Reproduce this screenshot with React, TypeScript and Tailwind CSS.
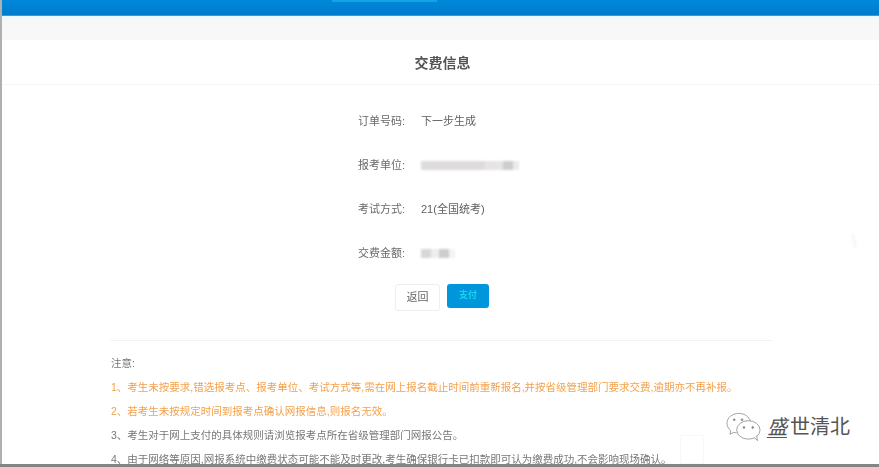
import React from "react";

const cjk = "font-['Liberation_Sans','Noto_Sans_CJK_SC',sans-serif]";

function Row({ label, children }: { label: string; children: React.ReactNode }) {
  return (
    <div className="flex h-[44px] items-center blur-[0.4px]">
      <div className="w-[63px] text-[11px] text-[#6a6a6a]">{label}</div>
      <div className="text-[11px] text-[#5f5f5f]">{children}</div>
    </div>
  );
}

function Blur({ parts }: { parts: [number, string][] }) {
  return (
    <div className="flex h-[9px] blur-[1.2px]">
      {parts.map(([w, c], i) => (
        <div key={i} className="h-full" style={{ width: w, background: c }} />
      ))}
    </div>
  );
}

export default function App() {
  return (
    <div className={`relative h-[467px] w-[879px] overflow-hidden bg-white ${cjk}`}>
      <div className="flex h-full flex-col border-l-2 border-[#b0b0b0]">
        <div className="h-[16px] shrink-0 border-b border-[#00b4dc] bg-gradient-to-b from-[#0088da] to-[#007ccd] pl-[330px]">
          <div className="h-[2px] w-[105px] bg-[#12a5e4]" />
        </div>
        <div className="h-[4px] shrink-0 bg-gradient-to-b from-[#e4fbff] to-[#f8f8f8]" />
        <div className="h-[20px] shrink-0 bg-[#f8f8f8]" />
        <div className="flex h-[45px] shrink-0 items-center justify-center border-b border-[#f6f6f6] pl-[4px] pt-[2px] text-[14px] font-bold text-[#555] blur-[0.4px]">
          交费信息
        </div>
        <div className="flex flex-col pl-[356px] pt-[14px]">
          <Row label="订单号码:">下一步生成</Row>
          <Row label="报考单位:">
            <Blur parts={[[64, "#dedbdb"], [18, "#e6e4e4"], [10, "#cfcccc"], [6, "#ecebeb"]]} />
          </Row>
          <Row label="考试方式:">21(全国统考)</Row>
          <Row label="交费金额:">
            <Blur parts={[[10, "#d9d6d6"], [8, "#eeeeee"], [10, "#cfcccc"], [6, "#f3f3f3"]]} />
          </Row>
        </div>
        <div className="ml-[393px] mt-[9px] flex gap-[7px] blur-[0.3px]">
          <div className="flex h-[27px] w-[45px] items-center justify-center rounded-[3px] border border-[#eeeeee] text-[11px] text-[#666]">返回</div>
          <div className="flex h-[24px] w-[42px] items-center justify-center rounded-[3px] bg-[#0096dc] text-[9px] font-bold text-[#19d3ef]">支付</div>
        </div>
        <div className="ml-[108px] mt-[29px] h-px w-[662px] shrink-0 bg-[#f2f2f2]" />
        <div className="ml-[109px] flex flex-col gap-[10px] pt-[15px] text-[10.5px] leading-[14px] text-[#777] blur-[0.5px]">
          <div>注意:</div>
          <div className="whitespace-nowrap text-[#f5a04a]">1、考生未按要求,错选报考点、报考单位、考试方式等,需在网上报名截止时间前重新报名,并按省级管理部门要求交费,逾期亦不再补报。</div>
          <div className="text-[#f5a04a]">2、若考生未按规定时间到报考点确认网报信息,则报名无效。</div>
          <div>3、考生对于网上支付的具体规则请浏览报考点所在省级管理部门网报公告。</div>
          <div className="whitespace-nowrap">4、由于网络等原因,网报系统中缴费状态可能不能及时更改,考生确保银行卡已扣款即可认为缴费成功,不会影响现场确认。</div>
        </div>
      </div>
      <div className="absolute bottom-0 left-0 h-[3px] w-full bg-[#858585]" />
      <div className="absolute left-[680px] top-[435px] h-[29px] w-[24px] rounded-[2px] border border-[#f8f8f8]" />
      <div className="absolute left-[852px] top-[234px] h-[14px] w-[4px] rotate-[-15deg] bg-[#f8f8f8] blur-[1px]" />
      <div className="absolute left-[726px] top-[412px] flex items-center gap-[8px]">
        <svg width="35" height="30" viewBox="0 0 36 30" fill="none" stroke="#8a8a8a" strokeWidth="0.8">
          <path d="M11 21c-1 0-2-.2-3-.5l-4 2 1-3.500C2.500 17 1 14 1 11 1 5.500 6.500 1 13 1c6 0 11 3.500 12 8" />
          <ellipse cx="23" cy="18" rx="12" ry="9.500" fill="white" />
          <path d="M29 26l3.500 3-1-5" fill="white" />
          <circle cx="8.500" cy="7.500" r=".9" fill="#777" />
          <circle cx="16.500" cy="7.500" r=".9" fill="#777" />
          <circle cx="18.500" cy="15.500" r=".9" fill="#777" />
          <circle cx="27.500" cy="15.500" r=".9" fill="#777" />
        </svg>
        <span className="flex text-[20px] leading-none text-[#555]">
          <span className="mr-[1px] inline-block -skew-x-12 border-b border-[#555]">盛</span>
          <span>世清北</span>
        </span>
      </div>
    </div>
  );
}
